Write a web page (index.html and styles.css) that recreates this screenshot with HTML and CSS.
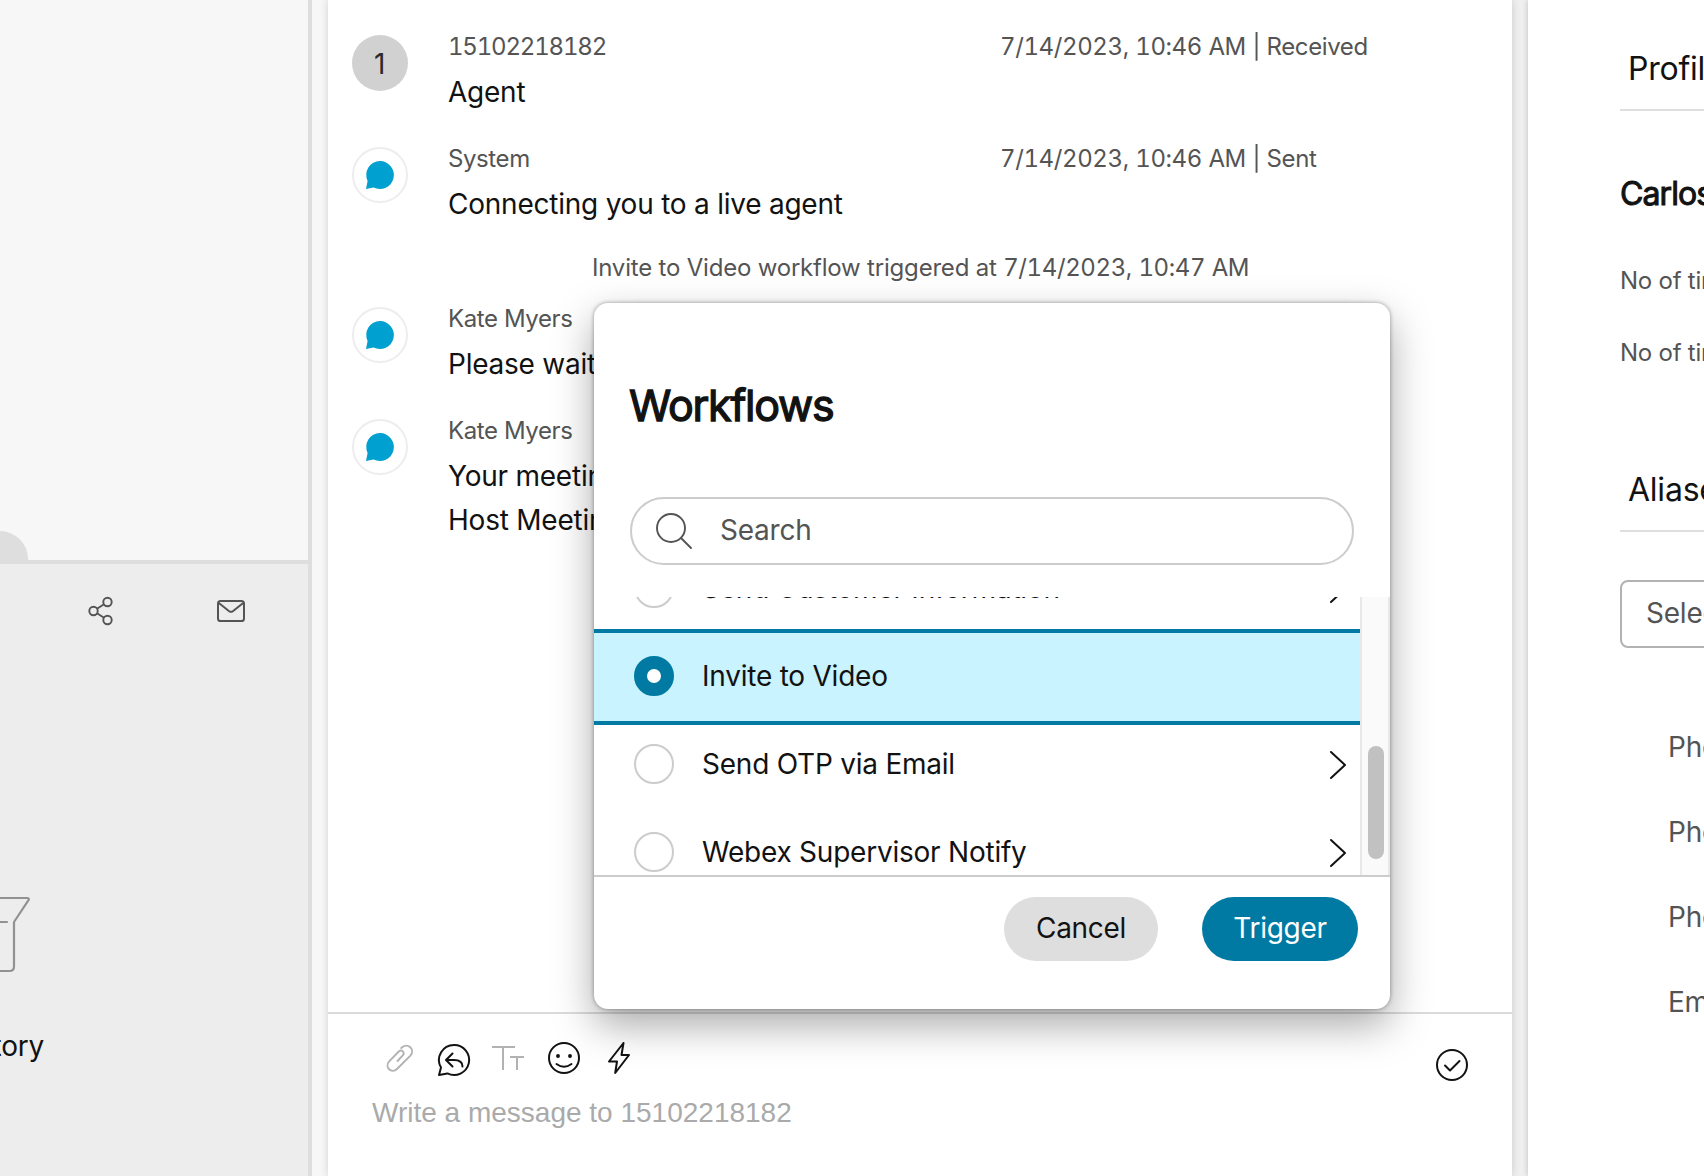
FILE: index.html
```html
<!DOCTYPE html>
<html lang="en">
<head>
<meta charset="utf-8">
<title>Agent Desktop</title>
<link rel="stylesheet" href="styles.css">
</head>
<body>
<div class="app">
  <aside class="sidebar">
    <div class="sidebar-top"><span class="tab-handle"></span></div>
    <div class="sidebar-bottom">
      <div class="sidebar-tools">
        <svg class="share" viewBox="0 0 26 28" fill="none" stroke="#545454" stroke-width="1.900"><circle cx="5.500" cy="14" r="4.200"/><circle cx="19.500" cy="5" r="4.200"/><circle cx="19.500" cy="23" r="4.200"/><path d="M9 11.700l7-4.500M9 16.300l7 4.500"/></svg>
        <svg class="mail" viewBox="0 0 28 22" fill="none" stroke="#545454" stroke-width="2" stroke-linejoin="round"><rect x="1" y="1" width="26" height="20" rx="2.600"/><path d="M1.800 3l10.400 8.200q1.800 1.300 3.600 0L26.200 3"/></svg>
      </div>
      <svg class="drawer" viewBox="0 0 64 78" fill="none" stroke="#929292" stroke-width="2.200" stroke-linecap="round" stroke-linejoin="round"><path d="M4 2h56.500q2 .4 1 2.200L47 26v44.500q0 4.500-4.500 4.500H4M4 26h36"/></svg>
      <div class="history">History</div>
    </div>
  </aside>

  <main class="chat">
    <div class="messages">
      <div class="message">
        <div class="avatar initial">1</div>
        <div class="body">
          <div class="meta"><span class="name phone-number">15102218182</span><span class="time">7/14/2023, 10:46 AM | Received</span></div>
          <div class="text">Agent</div>
        </div>
      </div>
      <div class="message">
        <div class="avatar bubble"><svg viewBox="0 0 28 28"><path d="M14 0a14 14 0 1 1-6.400 26.500L0 28l1.600-8A14 14 0 0 1 14 0z" fill="#00a0d1"/></svg></div>
        <div class="body">
          <div class="meta"><span class="name">System</span><span class="time">7/14/2023, 10:46 AM | Sent</span></div>
          <div class="text">Connecting you to a live agent</div>
        </div>
      </div>
      <div class="event">Invite to Video workflow triggered at <span class="time">7/14/2023, 10:47 AM</span></div>
      <div class="message">
        <div class="avatar bubble"><svg viewBox="0 0 28 28"><path d="M14 0a14 14 0 1 1-6.400 26.500L0 28l1.600-8A14 14 0 0 1 14 0z" fill="#00a0d1"/></svg></div>
        <div class="body">
          <div class="meta"><span class="name">Kate Myers</span></div>
          <div class="text">Please wait</div>
        </div>
      </div>
      <div class="message">
        <div class="avatar bubble"><svg viewBox="0 0 28 28"><path d="M14 0a14 14 0 1 1-6.400 26.500L0 28l1.600-8A14 14 0 0 1 14 0z" fill="#00a0d1"/></svg></div>
        <div class="body">
          <div class="meta"><span class="name">Kate Myers</span></div>
          <div class="text">Your meeting<br>Host Meeting</div>
        </div>
      </div>
    </div>

    <div class="composer">
      <div class="tools">
        <svg class="clip" viewBox="0 0 28 28" fill="none" stroke="#b2b2b2" stroke-width="1.900" stroke-linecap="round"><path d="M11.500 17l5.500-5.800c2-2.800-1.200-6-4-3.900L3.400 17.200c-5.400 5.800 2 13.200 7.800 7.600L24.400 11.600c5.200-6-2.600-13.600-9.200-7.600"/></svg>
        <svg class="reply" viewBox="0 0 32 32" fill="none" stroke="#121212" stroke-width="2" stroke-linecap="round" stroke-linejoin="round"><path d="M16 1a15 15 0 1 1-6.600 28.400L1 31l2-7.500A15 15 0 0 1 16 1z"/><path d="M14.500 9.500L8 16l6.500 6.500M8.500 16H16q8.500 0 8.500 6.500"/></svg>
        <svg class="format" viewBox="0 0 32 24" fill="none" stroke="#b2b2b2" stroke-width="2"><path d="M0 1h23M11 1v23M18 11h14M25 11v13"/></svg>
        <svg class="smile" viewBox="0 0 32 32" fill="none" stroke="#121212" stroke-width="2" stroke-linecap="round"><circle cx="16" cy="16" r="15"/><path d="M8.500 22q7.500 5.500 15 0"/><circle cx="10" cy="14" r="1.200" fill="#121212" stroke-width="1.500"/><circle cx="22" cy="14" r="1.200" fill="#121212" stroke-width="1.500"/></svg>
        <svg class="bolt" viewBox="0 0 22 32" fill="none" stroke="#121212" stroke-width="2" stroke-linejoin="round"><path d="M15.500 1L1 19.500h8L7.200 31 21 13h-7.500z"/></svg>
        <svg class="done" viewBox="0 0 32 32" fill="none" stroke="#121212" stroke-width="2" stroke-linecap="round" stroke-linejoin="round"><circle cx="16" cy="16" r="15"/><path d="M9 16.500l5 5 9.500-9.500"/></svg>
      </div>
      <div class="placeholder">Write a message to 15102218182</div>
    </div>
  </main>

  <aside class="profile">
    <h2 class="section">Profile</h2>
    <div class="customer">Carlos</div>
    <div class="stat">No of times</div>
    <div class="stat">No of times</div>
    <h2 class="section aliases">Aliases</h2>
    <div class="select">Select</div>
    <ul class="alias-list"><li>Phone</li><li>Phone</li><li>Phone</li><li>Email</li></ul>
  </aside>

  <section class="dialog">
    <h1>Workflows</h1>
    <div class="search">
      <svg viewBox="0 0 36 36" fill="none" stroke="#545454" stroke-width="1.900" stroke-linecap="round"><circle cx="15" cy="15" r="14"/><path d="M25 25l10 10"/></svg>
      <span>Search</span>
    </div>
    <div class="list">
      <div class="rows">
        <div class="row first"><i class="radio"></i><span>Send Customer Information</span><svg class="chevron" viewBox="0 0 16 28"><path d="M1 1l14 13L1 27"/></svg></div>
        <div class="row selected"><i class="radio"></i><span>Invite to Video</span></div>
        <div class="row"><i class="radio"></i><span>Send OTP via Email</span><svg class="chevron" viewBox="0 0 16 28"><path d="M1 1l14 13L1 27"/></svg></div>
        <div class="row"><i class="radio"></i><span>Webex Supervisor Notify</span><svg class="chevron" viewBox="0 0 16 28"><path d="M1 1l14 13L1 27"/></svg></div>
      </div>
      <div class="scrollbar"><div class="thumb"></div></div>
    </div>
    <footer>
      <button class="cancel">Cancel</button>
      <button class="trigger">Trigger</button>
    </footer>
  </section>
</div>
</body>
</html>
```
FILE: styles.css
```css
* { box-sizing: border-box; }
body {
  margin: 0;
  width: 1704px;
  height: 1176px;
  overflow: hidden;
  background: #f7f7f7;
  color: #121212;
  font: 28px/44px Inter, "Liberation Sans", sans-serif;
  letter-spacing: -0.23px;
}
h1, h2, ul { margin: 0; padding: 0; font-weight: 400; list-style: none; }
svg { display: block; flex: none; overflow: visible; }

.app {
  position: relative;
  display: grid;
  grid-template-columns: 312px 1184px 1fr;
  column-gap: 16px;
  width: 1704px;
  height: 1176px;
  overflow: hidden;
  background: linear-gradient(to right, #f7f7f7 1000px, #efefef 1000px);
}

/* Left navigation */
.sidebar {
  display: flex;
  flex-direction: column;
  border-right: 4px solid #dedede;
  overflow: hidden;
}
.sidebar-top {
  display: flex;
  align-items: flex-end;
  height: 564px;
  background: #f7f7f7;
  border-bottom: 4px solid #dedede;
}
.tab-handle { width: 28px; height: 29px; background: #dedede; border-top-right-radius: 28px; }
.sidebar-bottom { flex: 1; background: #ededed; }
.sidebar-tools { display: flex; align-items: center; gap: 103px; padding: 33px 0 0 88px; }
.share { width: 26px; height: 28px; }
.mail { width: 28px; height: 22px; }
.drawer { width: 64px; height: 78px; margin: 271px 0 0 -33px; }
.history { display: flex; justify-content: flex-end; width: 44px; margin-top: 50px; }

/* Conversation */
.chat {
  display: flex;
  flex-direction: column;
  background: #fff;
  box-shadow: 0 0 8px rgba(0, 0, 0, .16);
}
.messages { flex: 1; padding: 31px 24px 0; }
.message { display: flex; gap: 40px; margin-bottom: 29px; }
.avatar {
  display: flex;
  align-items: center;
  justify-content: center;
  flex: none;
  width: 56px;
  height: 56px;
  margin-top: 4px;
  border-radius: 50%;
}
.initial { padding: 2px 1px 0 0; background: #d1d1d1; color: #2b2b2b; }
.bubble { border: 2px solid #ededed; }
.bubble svg { width: 28px; height: 28px; }
.body { flex: 1; }
.meta { display: flex; margin-bottom: 7px; font-size: 24px; line-height: 32px; color: #545454; }
.name { width: 552px; letter-spacing: -0.4px; }
.phone-number { font-feature-settings: "tnum"; letter-spacing: -1.200px; }
.time { font-feature-settings: "tnum"; letter-spacing: -0.400px; word-spacing: 0.500px; }
.event { height: 48px; padding-left: 240px; font-size: 24px; line-height: 26px; letter-spacing: -0.200px; color: #545454; }

.composer { height: 164px; border-top: 2px solid #dbdbdb; }
.tools { display: flex; align-items: flex-start; padding: 28px 44px 0 58px; height: 78px; }
.clip { width: 28px; height: 28px; margin-top: 2px; }
.reply { width: 32px; height: 32px; margin: 2px 0 0 24px; }
.format { width: 32px; height: 24px; margin: 4px 0 0 22px; }
.smile { width: 32px; height: 32px; margin-left: 24px; }
.bolt { width: 22px; height: 32px; margin-left: 28px; }
.done { width: 32px; height: 32px; margin: 7px 0 0 auto; }
.placeholder {
  padding-left: 44px;
  font-family: "Liberation Sans", Arial, sans-serif;
  letter-spacing: 0;
  line-height: 42px;
  color: #aaa;
}

/* Customer profile */
.profile {
  padding: 49px 0 0 92px;
  overflow: hidden;
  background: #fff;
  box-shadow: 0 0 6px rgba(0, 0, 0, .2);
}
.section { height: 62px; padding-left: 8px; border-bottom: 2px solid #dedede; font-size: 32px; line-height: 40px; }
.customer {
  margin: 63px 0 51px;
  font-size: 32px;
  line-height: 40px;
  letter-spacing: -0.900px;
  -webkit-text-stroke: 1px #121212;
}
.stat { margin-bottom: 40px; font-size: 24px; line-height: 32px; color: #545454; white-space: nowrap; }
.aliases { margin-top: 101px; }
.select {
  width: 300px;
  height: 68px;
  margin-top: 48px;
  padding-left: 24px;
  border: 2px solid #b2b2b2;
  border-radius: 8px;
  line-height: 63px;
  color: #545454;
}
.alias-list { margin: 57px 0 0 48px; line-height: 85px; color: #545454; }

/* Workflow picker floats over the conversation */
.dialog {
  position: absolute;
  left: 594px;
  top: 303px;
  width: 796px;
  height: 706px;
  display: flex;
  flex-direction: column;
  background: #fff;
  border-radius: 14px;
  box-shadow: 0 0 4px rgba(0, 0, 0, .38), 0 16px 40px rgba(0, 0, 0, .34);
}
h1 {
  margin: 74px 0 62px 35px;
  font-size: 43px;
  line-height: 56px;
  letter-spacing: -1.250px;
  -webkit-text-stroke: 1.300px #121212;
}
.search {
  display: flex;
  align-items: center;
  gap: 28px;
  height: 68px;
  margin: 2px 36px 32px;
  padding: 0 24px;
  border: 2px solid #ccc;
  border-radius: 34px;
  color: #545454;
}
.search svg { width: 36px; height: 36px; }
.search span { padding-bottom: 2px; }
.list { display: flex; height: 278px; overflow: hidden; }
.rows { flex: 1; }
.row { display: flex; align-items: center; height: 88px; padding: 0 14px 0 40px; }
.first { margin-top: -53px; }
.selected {
  height: 96px;
  margin: -3px 0 -5px;
  padding-bottom: 2px;
  background: #c9f3ff;
  border: solid #007aa3;
  border-width: 4px 0;
}
.radio { flex: none; width: 40px; height: 40px; margin-right: 28px; border: 2px solid #ccc; border-radius: 50%; background: #fff; }
.selected .radio { border: 13px solid #007aa3; }
.chevron { width: 16px; height: 28px; margin: 2px 0 0 auto; fill: none; stroke: #121212; stroke-width: 2; stroke-linecap: round; stroke-linejoin: round; }
.scrollbar { width: 30px; padding: 149px 4px 0 6px; background: #fafafa; border: solid #e8e8e8; border-width: 0 2px; }
.thumb { width: 16px; height: 113px; border-radius: 8px; background: #c1c1c1; }
footer { display: flex; justify-content: flex-end; gap: 44px; padding: 20px 32px 0; border-top: 2px solid #ccc; }
button { height: 64px; padding: 0 0 2px; border: 0; border-radius: 32px; font: inherit; letter-spacing: -0.300px; line-height: 62px; }
.cancel { width: 154px; background: #dedede; color: #121212; }
.trigger { width: 156px; background: #007aa3; color: #fff; }
```
